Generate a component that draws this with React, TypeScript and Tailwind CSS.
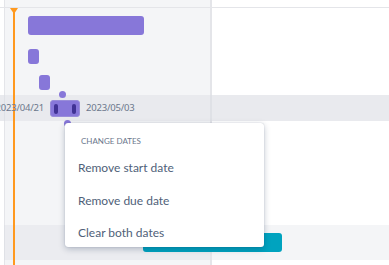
import React from 'react';

const font = { fontFamily: 'Lato, "Noto Sans", sans-serif' };
const dateFont = { fontFamily: '"Noto Sans", sans-serif' };

const Bar: React.FC<{ className: string }> = ({ className }) => (
  <div className={`absolute rounded-[3px] bg-[#8777d9] ${className}`} />
);

const MenuItem: React.FC<{ label: string }> = ({ label }) => (
  <div className="h-[32.5px] flex items-center px-[13px] text-[12px] text-[#505f79]">{label}</div>
);

const App: React.FC = () => {
  return (
    <div className="relative w-[389px] h-[265px] overflow-hidden bg-white" style={font}>
      {/* rows */}
      <div className="flex flex-col h-full">
        <div className="flex h-[8px] border-b border-[#e4e5e9]">
          <div className="w-[206px] bg-[#f4f5f7] border-l border-[#e4e5e9] ml-[4px]" />
          <div className="flex-1 border-l-2 border-[#e4e5e9]" />
        </div>
        <div className="flex h-[87px]">
          <div className="w-[206px] ml-[4px] bg-[#f4f5f7] border-l border-[#e4e5e9]" />
          <div className="flex-1 border-l-2 border-[#e4e5e9]" />
        </div>
        <div className="flex h-[26px] bg-[#e9eaee]">
          <div className="w-[206px] ml-[4px] border-l border-[#dfe1e6]" />
          <div className="flex-1 border-l-2 border-[#dfe1e6]" />
        </div>
        <div className="flex h-[104px]">
          <div className="w-[206px] ml-[4px] bg-[#f4f5f7] border-l border-[#e4e5e9]" />
          <div className="flex-1 border-l-2 border-[#e4e5e9]" />
        </div>
        <div className="flex h-[35px]">
          <div className="w-[206px] bg-[#ebecf0] border-l border-[#dfe1e6] ml-[4px]" />
          <div className="flex-1 bg-[#f4f5f7] border-l-2 border-[#e4e5e9]" />
        </div>
        <div className="flex flex-1">
          <div className="w-[206px] ml-[4px] bg-[#f4f5f7] border-l border-[#e4e5e9]" />
          <div className="flex-1 border-l-2 border-[#e4e5e9]" />
        </div>
      </div>

      {/* today marker */}
      <div className="absolute left-[13px] top-[8px] bottom-0 w-[2px] bg-[#ff991f]" />
      <svg className="absolute left-[10px] top-[8px]" width="8" height="6" viewBox="0 0 8 6">
        <path d="M0 0 H8 L4 6 Z" fill="#ff991f" />
      </svg>

      {/* bars */}
      <Bar className="left-[28px] top-[16px] w-[116px] h-[19px]" />
      <Bar className="left-[28px] top-[49px] w-[11px] h-[15px]" />
      <Bar className="left-[39px] top-[75px] w-[11px] h-[15px]" />
      <div className="absolute left-[59px] top-[91px] w-[7px] h-[7px] rounded-full bg-[#8777d9]" />

      {/* selected row dates */}
      <div className="absolute right-[345px] top-[101px] whitespace-nowrap text-[9.5px] leading-[14px] tracking-[-0.2px] text-[#6b778c]" style={dateFont}>2023/04/21</div>
      <div className="absolute left-[50px] top-[100px] w-[30px] h-[17px] rounded-[3px] bg-[#8777d9] border border-[#998dd9] flex items-center justify-between px-[3px]">
        <div className="w-[4px] h-[10px] rounded-full bg-[#403294]" />
        <div className="w-[4px] h-[10px] rounded-full bg-[#403294]" />
      </div>
      <div className="absolute left-[86px] top-[101px] whitespace-nowrap text-[9.5px] leading-[14px] tracking-[-0.2px] text-[#6b778c]" style={dateFont}>2023/05/03</div>
      <div className="absolute left-[64px] top-[120px] w-[7px] h-[7px] rounded-full bg-[#8777d9]" />

      {/* teal bar */}
      <div className="absolute left-[143px] top-[233px] w-[139px] h-[19px] rounded-[3px] bg-[#00a3bf]" />

      {/* menu */}
      <div className="absolute left-[65px] top-[123px] w-[199px] h-[124px] bg-white rounded-[3px] shadow-[0_2px_6px_rgba(9,30,66,0.25),0_0_1px_rgba(9,30,66,0.31)] pt-[11px]">
        <div className="px-[16px] h-[15px] text-[8px] leading-[15px] uppercase text-[#6b778c]">Change dates</div>
        <div className="h-[3px]" />
        <MenuItem label="Remove start date" />
        <MenuItem label="Remove due date" />
        <MenuItem label="Clear both dates" />
      </div>
    </div>
  );
};

export default App;
